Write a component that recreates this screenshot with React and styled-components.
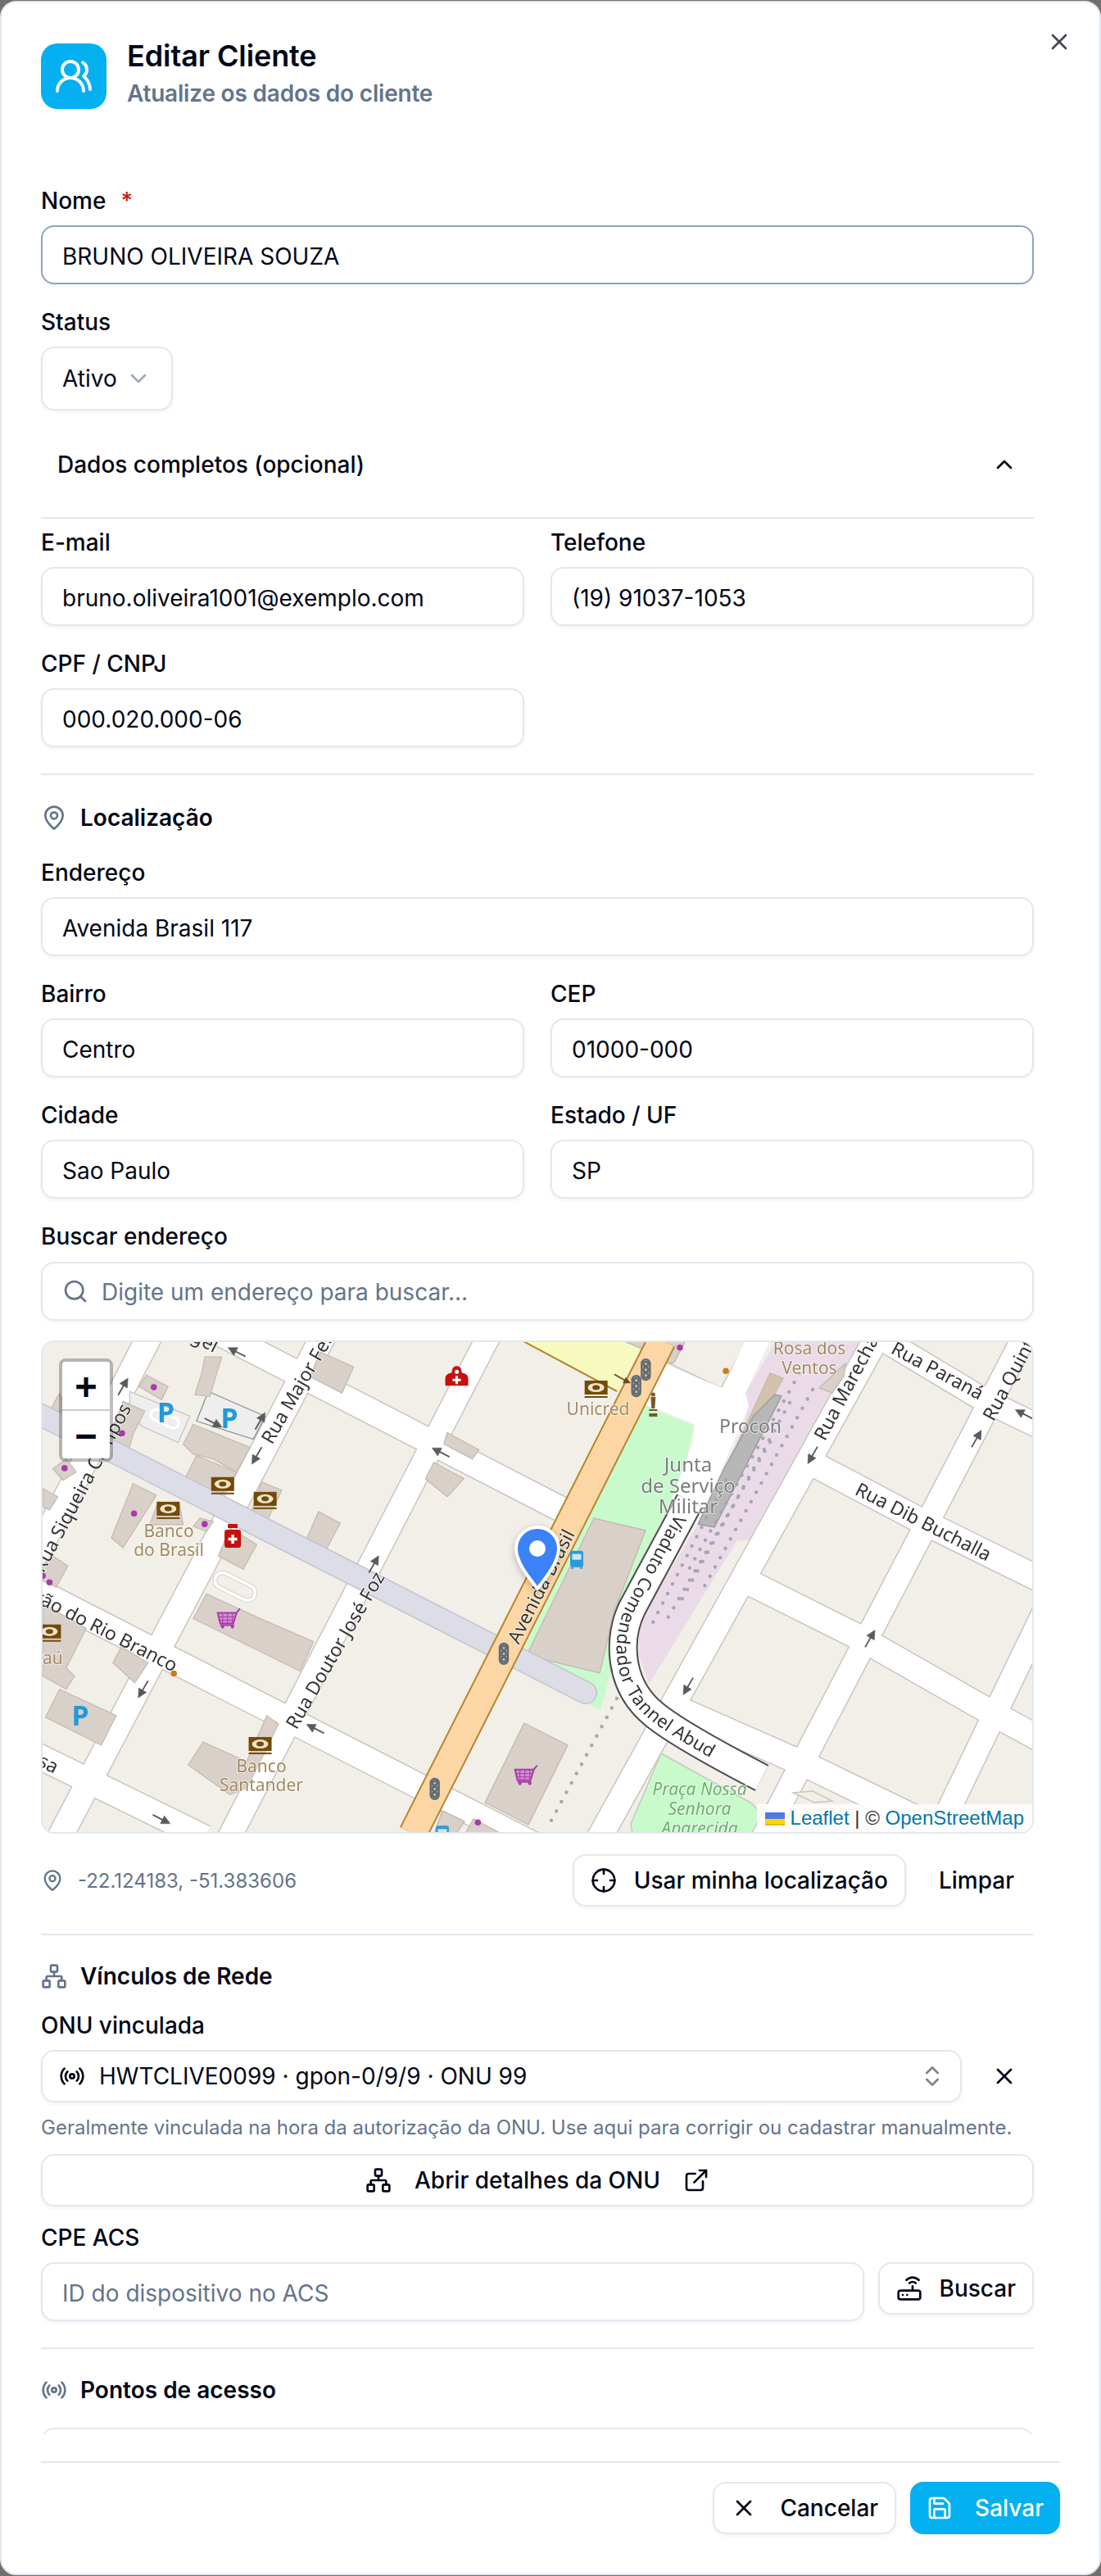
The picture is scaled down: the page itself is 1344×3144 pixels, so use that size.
import styled, { createGlobalStyle } from "styled-components";
import {
  UsersRound,
  X,
  ChevronDown,
  ChevronUp,
  MapPin,
  Search,
  Crosshair,
  Network,
  Radio,
  ChevronsUpDown,
  ExternalLink,
  Router,
  Save,
} from "lucide-react";

const Global = createGlobalStyle`
  * { box-sizing: border-box; }
  html, body { margin: 0; padding: 0; background: #6f6f6f; }
  body { font-family: Inter, "Noto Sans", sans-serif; color: #020817; }
`;

// map pictures were measured on two crops, so each has its own scale
const T3 = "translate(-10,-16) scale(0.408,0.4016)";
const at3 = (x, y) => [x / 2.45 - 10, y / 2.49 - 16];
const at4 = (x, y) => [610 + x / 2.5, y / 2.5 - 16];
const at11 = (x, y) => [510 + x / 3, y / 3 - 6];
const at12 = (x, y) => [390 + x / 3, 324 + y / 3];

const roads = [
  { d: "M135 -10L-10 270", w: 30 },
  { d: "M347 -10L21 610", w: 30 },
  { d: "M549 -10L228 610", w: 28 },
  { d: "M1024 -10L680 610", w: 30 },
  { d: "M1203 -10L880 610", w: 28 },
  { d: "M1225 330L1095 600", w: 28 },
  { d: "M200 -18L637 207", w: 30 },
  { d: "M-10 303L640 635", w: 30 },
  { d: "M-10 504L200 607", w: 30 },
  { d: "M1010 -12L1150 72L1220 106", w: 28 },
  { d: "M930 144L1074 220L1220 292", w: 30 },
  { d: "M860 293L1002 364L1142 444L1220 487", w: 30 },
  { d: "M770 446L938 520L1062 580L1110 606", w: 30 },
];

const buildings3 = [
  "340,145 405,180 385,220 318,180",
  "515,90 565,90 530,210 485,205 505,140",
  "860,75 960,120 925,200 830,150",
  "480,295 650,365 610,440 540,400 480,385 450,355",
  "270,225 335,255 300,325 285,380 240,380 245,290",
  "80,200 100,255 50,255",
  "60,430 100,400 130,440 90,465",
  "300,475 370,510 270,670 235,640",
  "375,530 440,540 450,600 350,600",
  "450,470 490,390 610,440 560,520",
  "685,470 745,495 700,590 650,570",
  "500,580 540,590 520,620 480,605",
  "590,610 670,660 630,735 555,695",
  "855,560 920,595 870,690 812,660",
  "30,490 75,515 50,555 30,545",
  "30,720 60,695 105,725 70,790 30,770",
  "30,840 160,915 100,1035 125,1060 100,1100 30,1060",
  "240,1020 265,970 345,1020 305,1080",
  "80,1100 250,1180 205,1270 38,1185",
  "520,810 680,885 840,955 800,1045 480,885",
  "700,1180 735,1205 690,1300 640,1400 590,1420 465,1330 510,1260 640,1320",
  "1240,320 1335,372 1315,400 1230,355",
  "1200,410 1290,460 1240,515 1175,460",
];

const streetLabels = [
  ["Rua Major Felix", 275, 124, -60],
  ["Rua Doutor José Foz", 305, 472, -60],
  ["Rua Siqueira Campos", -4, 281, -62],
  ["Avenida Brasil", 576, 368, -63],
  ["Rua Marechal", 950, 120, -62],
  ["Rua Quintino", 1156, 96, -62],
  ["Rua Paraná", 1040, 8, 28],
  ["Rua Dib Buchalla", 996, 180, 27],
];

const endLabels = [
  ["Rua Barão do Rio Branco", 165, 398, 27],
  ["Rua Sousa", 20, 522, 27],
  ["Rua Rangel", 215, 8, 27],
];

const placeLabels = [
  ["Banco", 156, 233, "#a18a62", 21],
  ["do Brasil", 156, 256, "#a18a62", 21],
  ["Banco", 269, 520, "#a18a62", 21],
  ["Santander", 269, 543, "#a18a62", 21],
  ["Itaú", 7, 388, "#a18a62", 21],
  ["Rosa dos", 938, 10, "#a18a62", 21],
  ["Ventos", 938, 34, "#a18a62", 21],
  ["Unicred", 680, 84, "#a18a62", 21],
  ["Procon", 866, 106, "#7d7d7d", 23],
  ["Junta", 790, 153, "#7d7d7d", 24],
  ["de Serviço", 790, 179, "#7d7d7d", 24],
  ["Militar", 790, 204, "#7d7d7d", 24],
];

const arrows = [
  [...at3(610, 75), 207],
  [...at3(270, 180), -60],
  [...at3(670, 390), 120],
  [...at3(540, 290), 27],
  [...at3(1220, 380), 207],
  [...at3(1020, 720), -60],
  [...at3(330, 1100), 120],
  [...at3(845, 1220), 207],
  [...at3(385, 1495), 27],
  [...at3(680, 285), -60],
  [...at4(830, 390), 120],
  [...at4(1330, 340), -60],
  [...at4(1475, 265), 207],
  [...at4(1005, 950), -60],
  [...at4(450, 1095), 120],
];

const purpleDots = [
  at3(362, 182),
  at3(267, 322),
  at3(95, 428),
  at3(303, 566),
  at3(514, 598),
  at3(50, 775),
  at3(30, 755),
  at4(425, 62),
  at12(430, 793),
];

const banks = [
  at3(568, 480),
  at3(695, 525),
  at3(405, 555),
  at3(50, 928),
  at3(680, 1270),
  at11(503, 195),
];

const parkings = [at3(398, 290), at3(588, 306), at3(142, 1210)];

function Bank({ x, y }) {
  return (
    <g transform={`translate(${x},${y})`}>
      <rect x="-14" y="-10" width="28" height="17" fill="#734a08" />
      <ellipse cx="0" cy="-1.5" rx="10" ry="5.5" fill="#eee3cc" />
      <ellipse cx="0" cy="-1.5" rx="4.5" ry="3" fill="#734a08" />
      <rect x="-14" y="9" width="28" height="2" fill="#734a08" />
    </g>
  );
}

function Arrow({ x, y, r }) {
  return (
    <g transform={`translate(${x},${y}) rotate(${r}) scale(1.2)`} fill="#5b5b5b" stroke="#5b5b5b">
      <path d="M-10 0H3" strokeWidth="1.6" fill="none" />
      <path d="M10 0L1 -4.5V4.5Z" strokeWidth="0.4" />
    </g>
  );
}

function TrafficLight({ x, y, r = 0 }) {
  return (
    <g transform={`translate(${x},${y}) rotate(${r})`} fill="none" stroke="#5f6a74" strokeWidth="2.4">
      <rect x="-5" y="-12.5" width="10" height="25" rx="5" fill="#c9b99f" />
      <circle cx="0" cy="-7" r="2.8" />
      <circle cx="0" cy="0" r="2.8" />
      <circle cx="0" cy="7" r="2.8" />
    </g>
  );
}

function Cart({ x, y }) {
  return (
    <g transform={`translate(${x},${y})`} stroke="#ac39ac" fill="none">
      <path d="M-13 -7H10L6 6H-10Z" fill="#cf8fcf" strokeWidth="2" />
      <path d="M-7 -7V6M-1 -7V6M5 -7V6M-12 -2H9M-11 2H7" strokeWidth="1" />
      <path d="M10 -7L14 -12M-10 8H7" strokeWidth="2" />
      <circle cx="-7" cy="10" r="1.6" fill="#ac39ac" />
      <circle cx="5" cy="10" r="1.6" fill="#ac39ac" />
    </g>
  );
}

function Bus({ x, y }) {
  return (
    <g transform={`translate(${x},${y})`}>
      <rect x="-8" y="-10" width="16" height="20" rx="3" fill="#2a9bd8" />
      <rect x="-5.5" y="-6" width="11" height="7" fill="#cfe5ee" />
      <rect x="-7" y="10" width="3" height="2" fill="#2a9bd8" />
      <rect x="4" y="10" width="3" height="2" fill="#2a9bd8" />
    </g>
  );
}

function MapDrawing() {
  const [px, py] = at3(598, 640);
  const [dx, dy] = at3(1268, 155);
  return (
    <MapSvg viewBox="2 2 1208 598" width="1208" height="598">
      <rect x="0" y="0" width="1212" height="602" fill="#f2efe9" />
      <polygon
        points="898,0 1000,0 866,244 850,244 742,420 730,384 730,344 802,224 858,104 864,80 860,64"
        fill="#ebdbe8"
      />
      <polygon
        points="737,79 797,104 793,121 783,171 762,212 698,336 696,404 683,452 672,446 587,381 600,355"
        fill="#c8facc"
      />
      <polygon points="757,504 868,565 900,602 722,602 720,590" fill="#c8facc" stroke="#c9c5bf" strokeWidth="1.5" />
      <polygon points="587,0 736,0 705,62" fill="#f7fabf" />
      <path d="M587 0L703 62" stroke="#b5862d" strokeWidth="2" />
      <path d="M767 28L830 58L862 0" stroke="#c9c5bf" strokeWidth="1.5" fill="none" />

      <g fill="none" stroke="#c9c5bf">
        {roads.map((r) => (
          <path key={r.d} d={r.d} strokeWidth={r.w + 3} />
        ))}
      </g>
      <g fill="none" stroke="#fff">
        {roads.map((r) => (
          <path key={r.d} d={r.d} strokeWidth={r.w} />
        ))}
      </g>
      <polygon
        points="764,30 832,58 860,0 890,0 860,64 864,80 802,224 762,214 796,124 798,102 738,78"
        fill="#fff"
      />

      <g transform={T3} fill="#eeeeee" stroke="#c4c2bc" strokeWidth="3">
        <polygon points="290,195 470,270 435,350 325,300 290,250" />
        <polygon points="525,195 695,270 660,340 490,285" stroke="#8c8c8c" />
        <rect x="350" y="262" width="90" height="32" rx="16" transform="rotate(26 395 278)" fill="none" stroke="#fff" strokeWidth="8" />
        <rect x="540" y="765" width="130" height="46" rx="23" transform="rotate(27 605 788)" fill="none" stroke="#d4d2cd" strokeWidth="14" />
        <rect x="540" y="765" width="130" height="46" rx="23" transform="rotate(27 605 788)" fill="none" stroke="#fff" strokeWidth="9" />
      </g>
      <g transform={T3} fill="#d9d0c9" stroke="#c5b9af" strokeWidth="3">
        {buildings3.map((p) => (
          <polygon key={p} points={p} />
        ))}
      </g>
      <g fill="#d9d0c9" stroke="#c5b9af" strokeWidth="1.4">
        <polygon points="675,217 738,232 700,330 682,406 593,384" />
        <polygon points="590,467 643,494 595,591 542,564" />
        <polygon points="490,574 517,587 507,602 480,602" />
        <polygon points="528,584 562,602 518,602" />
        <polygon points="710,0 740,0 733,10" />
        <polygon points="763,0 787,0 773,27 760,28" />
        <polygon points="950,58 982,28 980,44 966,64" />
        <polygon points="890,40 906,46 850,148 842,144" fill="#d2c2ae" />
      </g>
      <polygon
        points="896,66 904,68 822,228 802,224 834,156 870,92"
        fill="#b7b7b7"
        stroke="#9a9a9a"
        strokeWidth="1.4"
      />
      <g fill="none" stroke="#a6a6b5" strokeWidth="4.5" strokeLinecap="round" strokeDasharray="0 13">
        <path d="M926 40L786 288" />
        <path d="M942 60L810 300" />
        <path d="M914 76L778 324" />
        <path d="M890 124L762 344" />
        <path d="M836 170L744 350" />
        <path d="M703 437L617 597" />
      </g>

      <path d="M-10 86L665 430" stroke="#c4c3cc" strokeWidth="28" strokeLinecap="round" fill="none" />
      <path d="M-10 86L665 430" stroke="#dddde8" strokeWidth="25" strokeLinecap="round" fill="none" />
      <path d="M758 0L454 602" stroke="#b5862d" strokeWidth="36" fill="none" />
      <path d="M758 0L454 602" stroke="#fcd6a4" strokeWidth="32" fill="none" />

      <path
        id="viaduct"
        d="M792 196L722 326C704 362 704 420 748 456C772 476 830 508 880 534"
        fill="none"
        stroke="#4c4c4c"
        strokeWidth="36"
      />
      <path d="M792 196L722 326C704 362 704 420 748 456C772 476 830 508 880 534" fill="none" stroke="#fff" strokeWidth="32" />

      <g fill="#f2efe9" stroke="#c9c5bf" strokeWidth="1.4">
        <polygon points="918,552 942,550 966,562 944,564" />
      </g>

      {streetLabels.map(([t, x, y, r]) => (
        <StreetText key={t} transform={`translate(${x},${y}) rotate(${r})`} y="8">
          {t}
        </StreetText>
      ))}
      {endLabels.map(([t, x, y, r]) => (
        <StreetText key={t} transform={`translate(${x},${y}) rotate(${r})`} y="8" textAnchor="end">
          {t}
        </StreetText>
      ))}
      <StreetText dy="8" $size={22}>
        <textPath href="#viaduct" startOffset="22">
          Viaduto Comendador Tannel Abud
        </textPath>
      </StreetText>
      {placeLabels.map(([t, x, y, c, s]) => (
        <PlaceText key={`${t}${x}`} x={x} y={y + 7} fill={c} fontSize={s}>
          {t}
        </PlaceText>
      ))}
      <PlaceText x="804" y="555" fill="#6fae6f" fontStyle="italic" fontSize="21">
        Praça Nossa
      </PlaceText>
      <PlaceText x="804" y="579" fill="#6fae6f" fontStyle="italic" fontSize="21">
        Senhora
      </PlaceText>
      <PlaceText x="804" y="603" fill="#6fae6f" fontStyle="italic" fontSize="21">
        Aparecida
      </PlaceText>

      {parkings.map(([x, y]) => (
        <ParkingText key={x} x={x} y={y}>
          P
        </ParkingText>
      ))}
      {banks.map(([x, y]) => (
        <Bank key={x} x={x} y={y} />
      ))}
      {arrows.map(([x, y, r]) => (
        <Arrow key={`${x}${y}`} x={x} y={y} r={r} />
      ))}
      {purpleDots.map(([x, y]) => (
        <circle key={x} cx={x} cy={y} r="3.8" fill="#ac39ac" />
      ))}
      <circle cx={at3(422, 1052)[0]} cy={at3(422, 1052)[1]} r="3.8" fill="#c77f1e" />
      <circle cx={at4(565, 133)[0]} cy={at4(565, 133)[1]} r="3.8" fill="#c77f1e" />

      <g transform={`translate(${px},${py})`}>
        <rect x="-10" y="-10" width="20" height="22" rx="3" fill="#c70f0f" />
        <rect x="-6" y="-17" width="12" height="5" rx="1" fill="#c70f0f" />
        <path d="M0 -4V7M-5.5 1.5H5.5" stroke="#fff" strokeWidth="3.4" />
      </g>
      <g transform={`translate(${dx},${dy})`}>
        <path d="M-14 9V1C-14 -5 -10 -6 -6 -7C-6 -13 -3 -15 0 -15C3 -15 6 -13 6 -7C10 -6 14 -5 14 1V9Z" fill="#c70f0f" />
        <path d="M0 -3V7M-5 2H5" stroke="#fff" strokeWidth="3" />
        <circle cx="0" cy="-8" r="2.6" fill="#fff" />
      </g>
      <Cart {...{ x: at3(585, 885)[0], y: at3(585, 885)[1] }} />
      <Cart {...{ x: at12(605, 620)[0], y: at12(605, 620)[1] }} />
      <TrafficLight x={at12(525, 175)[0]} y={at12(525, 175)[1]} />
      <TrafficLight x={at12(272, 670)[0]} y={at12(272, 670)[1]} />
      <TrafficLight x={at11(685, 125)[0]} y={at11(685, 125)[1]} />
      <TrafficLight x={at11(650, 185)[0]} y={at11(650, 185)[1]} />
      <Bus x={at11(432, 818)[0]} y={at11(432, 818)[1]} />
      <Bus x={at12(300, 835)[0]} y={at12(300, 835)[1]} />
      <g transform={`translate(${at11(712, 255)[0]},${at11(712, 255)[1]})`} fill="#7a5a28">
        <circle cx="0" cy="-13" r="2.5" />
        <path d="M-3 -10H3L2 4H-2Z" />
        <rect x="-5" y="5" width="10" height="2" />
        <rect x="-5" y="10" width="10" height="4" />
      </g>
      <path d={`M${at11(570, 142)[0]} ${at11(570, 142)[1]}L${at11(610, 165)[0]} ${at11(610, 165)[1]}`} stroke="#7a5a28" strokeWidth="2" />
      <polygon
        points={`${at11(600, 175).join(",")} ${at11(630, 175).join(",")} ${at11(612, 152).join(",")}`}
        fill="#6b4a1e"
      />
    </MapSvg>
  );
}

export default function App() {
  return (
    <>
      <Global />
      <Dialog>
        <CloseButton>
          <X size={32} />
        </CloseButton>
        <Body>
          <Header>
            <HeaderIcon>
              <UsersRound size={48} color="#fff" />
            </HeaderIcon>
            <HeaderText>
              <Title>Editar Cliente</Title>
              <Subtitle>Atualize os dados do cliente</Subtitle>
            </HeaderText>
          </Header>

          <Field $mt={98}>
            <Label>
              Nome<Required>*</Required>
            </Label>
            <Input $focused defaultValue="BRUNO OLIVEIRA SOUZA" />
          </Field>
          <Field>
            <Label>Status</Label>
            <StatusSelect>
              Ativo
              <ChevronDown size={32} color="#64748b" opacity={0.6} />
            </StatusSelect>
          </Field>

          <Collapse>
            Dados completos (opcional)
            <ChevronUp size={32} />
          </Collapse>

          <TwoCols $mt={15}>
            <Field $mt={0}>
              <Label>E-mail</Label>
              <Input defaultValue="bruno.oliveira1001@exemplo.com" />
            </Field>
            <Field $mt={0}>
              <Label>Telefone</Label>
              <Input defaultValue="(19) 91037-1053" />
            </Field>
            <Field $mt={0}>
              <Label>CPF / CNPJ</Label>
              <Input defaultValue="000.020.000-06" />
            </Field>
          </TwoCols>

          <Divider />
          <SectionHeading $mt={34}>
            <MapPin size={32} color="#64748b" />
            Localização
          </SectionHeading>

          <Field $mt={35}>
            <Label>Endereço</Label>
            <Input defaultValue="Avenida Brasil 117" />
          </Field>
          <TwoCols $mt={32}>
            <Field $mt={0}>
              <Label>Bairro</Label>
              <Input defaultValue="Centro" />
            </Field>
            <Field $mt={0}>
              <Label>CEP</Label>
              <Input defaultValue="01000-000" />
            </Field>
            <Field $mt={0}>
              <Label>Cidade</Label>
              <Input defaultValue="Sao Paulo" />
            </Field>
            <Field $mt={0}>
              <Label>Estado / UF</Label>
              <Input defaultValue="SP" />
            </Field>
          </TwoCols>
          <Field>
            <Label>Buscar endereço</Label>
            <SearchBox>
              <Search size={32} color="#64748b" />
              <SearchInput placeholder="Digite um endereço para buscar..." />
            </SearchBox>
          </Field>

          <MapFrame>
            <MapDrawing />
            <ZoomBar>
              <ZoomButton $first>+</ZoomButton>
              <ZoomButton>−</ZoomButton>
            </ZoomBar>
            <Marker viewBox="0 0 56 80" width="56" height="80">
              <path
                d="M28 2C13 2 2 14 2 28C2 46 20 66 28 77C36 66 54 46 54 28C54 14 43 2 28 2Z"
                fill="#3b82f6"
                stroke="#fff"
                strokeWidth="4"
              />
              <circle cx="28" cy="28" r="10" fill="#fff" />
            </Marker>
            <Attribution>
              <AttributionFlag width="24" height="16" viewBox="0 0 12 8">
                <path fill="#4C7BE1" d="M0 0h12v4H0z" />
                <path fill="#FFD500" d="M0 4h12v3H0z" />
                <path fill="#E0BC00" d="M0 7h12v1H0z" />
              </AttributionFlag>
              <AttributionLink>Leaflet</AttributionLink> | © <AttributionLink>OpenStreetMap</AttributionLink>
            </Attribution>
          </MapFrame>

          <CoordsRow>
            <Coords>
              <MapPin size={28} color="#64748b" />
              -22.124183, -51.383606
            </Coords>
            <CoordsActions>
              <Button $px={20} $gap={21}>
                <Crosshair size={32} />
                Usar minha localização
              </Button>
              <GhostButton>Limpar</GhostButton>
            </CoordsActions>
          </CoordsRow>

          <Divider $mt={33} />
          <SectionHeading>
            <Network size={32} color="#64748b" />
            Vínculos de Rede
          </SectionHeading>

          <Field $mt={28}>
            <Label>ONU vinculada</Label>
            <OnuRow>
              <OnuSelect>
                <OnuValue>
                  <Radio size={32} />
                  HWTCLIVE0099 · gpon-0/9/9 · ONU 99
                </OnuValue>
                <ChevronsUpDown size={32} opacity={0.5} />
              </OnuSelect>
              <IconButton>
                <X size={32} />
              </IconButton>
            </OnuRow>
          </Field>
          <Hint>Geralmente vinculada na hora da autorização da ONU. Use aqui para corrigir ou cadastrar manualmente.</Hint>
          <WideButton>
            <Network size={32} />
            Abrir detalhes da ONU
            <ExternalLink size={32} />
          </WideButton>

          <Field $mt={24}>
            <Label>CPE ACS</Label>
            <AcsRow>
              <Input placeholder="ID do dispositivo no ACS" />
              <Button $px={20} $gap={21}>
                <Router size={32} />
                Buscar
              </Button>
            </AcsRow>
          </Field>

          <Divider />
          <SectionHeading>
            <Radio size={32} color="#64748b" />
            Pontos de acesso
          </SectionHeading>
          <CutBox />
        </Body>

        <Footer>
          <Button $px={20} $gap={28}>
            <X size={32} />
            Cancelar
          </Button>
          <PrimaryButton>
            <Save size={32} />
            Salvar
          </PrimaryButton>
        </Footer>
      </Dialog>
    </>
  );
}

const Dialog = styled.div`
  position: relative;
  display: flex;
  flex-direction: column;
  width: 1344px;
  height: 3142px;
  margin: 1px 0;
  background: #fff;
  border: 2px solid #e2e8f0;
  border-radius: 20px;
  overflow: hidden;
`;
const CloseButton = styled.div`
  position: absolute;
  top: 32px;
  right: 33px;
  display: flex;
  color: #44474f;
`;
const Body = styled.div`
  flex: 1;
  min-height: 0;
  overflow: hidden;
  padding: 50px 80px 0 48px;
`;
const Header = styled.div`
  display: flex;
  align-items: center;
  gap: 25px;
  height: 80px;
`;
const HeaderIcon = styled.div`
  display: flex;
  align-items: center;
  justify-content: center;
  width: 80px;
  height: 80px;
  border-radius: 20px;
  background: #05b0f1;
`;
const HeaderText = styled.div`
  display: flex;
  flex-direction: column;
  margin-top: -5px;
`;
const Title = styled.div`
  font-size: 36px;
  line-height: 40px;
  font-weight: 600;
  letter-spacing: -0.1px;
`;
const Subtitle = styled.div`
  margin-top: 6px;
  font-size: 28px;
  line-height: 40px;
  font-weight: 600;
  letter-spacing: -0.2px;
  color: #64748b;
`;
const Field = styled.div`
  display: flex;
  flex-direction: column;
  align-items: stretch;
  margin-top: ${(p) => p.$mt ?? 32}px;
`;
const Label = styled.label`
  display: block;
  height: 28px;
  margin-bottom: 16px;
  font-size: 28px;
  line-height: 28px;
  font-weight: 500;
`;
const Required = styled.span`
  margin-left: 18px;
  color: #d01212;
`;
const Input = styled.input`
  width: 100%;
  height: 72px;
  min-width: 0;
  padding: 3px 24px 0;
  font-family: inherit;
  font-size: 28px;
  color: #020817;
  background: #fff;
  border: 2px solid ${(p) => (p.$focused ? "#8fa3bd" : "#e2e8f0")};
  border-radius: 16px;
  box-shadow: 0 2px 4px rgba(15, 23, 42, 0.05);
  outline: none;
  &::placeholder {
    color: #64748b;
    opacity: 1;
  }
`;
const StatusSelect = styled.div`
  display: flex;
  align-items: center;
  justify-content: space-between;
  width: 161px;
  height: 78px;
  padding: 0 24px;
  font-size: 28px;
  border: 2px solid #e2e8f0;
  border-radius: 16px;
  box-shadow: 0 2px 4px rgba(15, 23, 42, 0.05);
`;
const Collapse = styled.div`
  display: flex;
  align-items: center;
  justify-content: space-between;
  height: 130px;
  margin-top: 2px;
  padding: 0 20px;
  font-size: 28px;
  font-weight: 500;
  border-bottom: 2px solid #e2e8f0;
`;
const TwoCols = styled.div`
  display: grid;
  grid-template-columns: 590px 590px;
  column-gap: 32px;
  row-gap: 32px;
  margin-top: ${(p) => p.$mt}px;
`;
const Divider = styled.div`
  height: 2px;
  margin-top: ${(p) => p.$mt ?? 32}px;
  background: #e2e8f0;
`;
const SectionHeading = styled.div`
  display: flex;
  align-items: center;
  gap: 16px;
  height: 36px;
  margin-top: ${(p) => p.$mt ?? 32}px;
  font-size: 28px;
  font-weight: 600;
`;
const SearchBox = styled.div`
  display: flex;
  align-items: center;
  gap: 16px;
  height: 72px;
  margin-top: 1px;
  padding: 0 24px;
  border: 2px solid #e2e8f0;
  border-radius: 16px;
  box-shadow: 0 2px 4px rgba(15, 23, 42, 0.05);
`;
const SearchInput = styled.input`
  flex: 1;
  min-width: 0;
  padding: 2px 0 0;
  border: none;
  outline: none;
  font-family: inherit;
  font-size: 28px;
  color: #020817;
  &::placeholder {
    color: #64748b;
    opacity: 1;
  }
`;
const MapFrame = styled.div`
  position: relative;
  width: 1212px;
  height: 602px;
  margin-top: 24px;
  border: 2px solid #e2e8f0;
  border-radius: 16px;
  overflow: hidden;
`;
const MapSvg = styled.svg`
  display: block;
  filter: blur(0.6px);
`;
const StreetText = styled.text`
  font-family: "Noto Sans", sans-serif;
  font-size: ${(p) => p.$size ?? 23}px;
  fill: #333;
  paint-order: stroke;
  stroke: rgba(255, 255, 255, 0.7);
  stroke-width: 2px;
`;
const PlaceText = styled.text`
  font-family: "Noto Sans", sans-serif;
  text-anchor: middle;
  paint-order: stroke;
  stroke: rgba(255, 255, 255, 0.6);
  stroke-width: 2px;
`;
const ParkingText = styled.text`
  font-family: "Noto Sans", sans-serif;
  font-size: 34px;
  font-weight: 700;
  text-anchor: middle;
  fill: #1f9bdc;
`;
const ZoomBar = styled.div`
  position: absolute;
  top: 20px;
  left: 20px;
  width: 66px;
  border: 4px solid rgba(0, 0, 0, 0.25);
  border-radius: 8px;
  background-clip: padding-box;
  overflow: hidden;
`;
const ZoomButton = styled.div`
  display: flex;
  align-items: center;
  justify-content: center;
  height: ${(p) => (p.$first ? 60 : 58)}px;
  background: #fff;
  font-family: "DejaVu Sans Mono", monospace;
  font-size: 44px;
  font-weight: 700;
  color: #020817;
  border-bottom: ${(p) => (p.$first ? "2px solid #ccc" : "none")};
`;
const Marker = styled.svg`
  position: absolute;
  left: 576px;
  top: 224px;
  filter: drop-shadow(0 3px 4px rgba(0, 0, 0, 0.25));
`;
const Attribution = styled.div`
  position: absolute;
  right: 0;
  bottom: 0;
  height: 34px;
  padding: 0 10px;
  background: rgba(255, 255, 255, 0.8);
  font-family: "Liberation Sans", Arial, sans-serif;
  font-size: 24px;
  line-height: 34px;
  color: #333;
  white-space: pre;
`;
const AttributionFlag = styled.svg`
  margin-right: 7px;
  vertical-align: -1px;
`;
const AttributionLink = styled.span`
  color: #0078a8;
`;
const CoordsRow = styled.div`
  display: flex;
  align-items: center;
  justify-content: space-between;
  margin-top: 25px;
`;
const Coords = styled.div`
  display: flex;
  align-items: center;
  gap: 17px;
  font-size: 24px;
  color: #64748b;
`;
const CoordsActions = styled.div`
  display: flex;
  align-items: center;
  gap: 16px;
`;
const Button = styled.div`
  display: flex;
  flex: none;
  align-items: center;
  justify-content: center;
  gap: ${(p) => p.$gap ?? 16}px;
  height: 64px;
  padding: 0 ${(p) => p.$px ?? 24}px;
  font-size: 28px;
  font-weight: 500;
  white-space: nowrap;
  background: #fff;
  border: 2px solid #e2e8f0;
  border-radius: 16px;
  box-shadow: 0 2px 4px rgba(15, 23, 42, 0.05);
`;
const GhostButton = styled(Button)`
  padding: 0 22px;
  border-color: transparent;
  box-shadow: none;
`;
const PrimaryButton = styled(Button)`
  gap: 27px;
  padding: 0 18px;
  color: #fff;
  background: #05b0f1;
  border-color: #05b0f1;
`;
const OnuRow = styled.div`
  display: flex;
  align-items: center;
  justify-content: space-between;
`;
const OnuSelect = styled.div`
  display: flex;
  align-items: center;
  justify-content: space-between;
  width: 1124px;
  height: 64px;
  padding: 0 18px 0 20px;
  font-size: 28px;
  border: 2px solid #e2e8f0;
  border-radius: 16px;
  box-shadow: 0 2px 4px rgba(15, 23, 42, 0.05);
`;
const OnuValue = styled.div`
  display: flex;
  align-items: center;
  gap: 17px;
`;
const IconButton = styled.div`
  display: flex;
  align-items: center;
  justify-content: center;
  width: 72px;
`;
const Hint = styled.div`
  margin-top: 15px;
  font-size: 24px;
  line-height: 32px;
  color: #64748b;
`;
const WideButton = styled(Button)`
  gap: 28px;
  margin-top: 16px;
`;
const AcsRow = styled.div`
  display: flex;
  align-items: flex-start;
  gap: 17px;
`;
const CutBox = styled.div`
  height: 120px;
  margin-top: 28px;
  border: 2px solid #e2e8f0;
  border-radius: 16px;
`;
const Footer = styled.div`
  display: flex;
  flex: none;
  justify-content: flex-end;
  gap: 17px;
  margin: 33px 48px 0;
  padding: 23px 0 48px;
  border-top: 2px solid #e2e8f0;
`;
